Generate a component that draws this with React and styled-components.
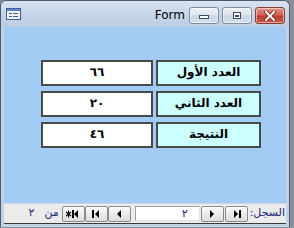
import React from 'react';
import styled, { createGlobalStyle } from 'styled-components';

const GlobalStyle = createGlobalStyle`
  html, body {
    margin: 0;
    padding: 0;
    background: #8a8f96;
    overflow: hidden;
  }
`;

const Window = styled.div`
  width: 288px;
  height: 226px;
  border: 1px solid #4d5b70;
  border-bottom: none;
  border-radius: 6px 6px 0 0;
  background: #c3d3e7;
  display: flex;
  flex-direction: column;
  overflow: hidden;
`;

const TitleBar = styled.div`
  height: 26px;
  flex-shrink: 0;
  display: flex;
  align-items: flex-start;
  padding: 6px 4px 0 5px;
  box-sizing: border-box;
  border-radius: 5px 5px 0 0;
  background: linear-gradient(to bottom, #d9e4f1 0%, #c7d6e9 45%, #bccde3 100%);
`;

const TitleIcon = styled.div`
  margin-top: 1px;
  display: flex;
`;

const TitleText = styled.span`
  flex: 1;
  text-align: right;
  padding-right: 4px;
  font-family: "DejaVu Sans", sans-serif;
  font-size: 12px;
  line-height: 17px;
  color: #000;
`;

const CaptionButtons = styled.div`
  display: flex;
  gap: 3px;
`;

const CaptionButton = styled.div`
  width: 28px;
  height: 15px;
  border: 1px solid ${(p) => (p.close ? '#8a3b30' : '#7f8ea3')};
  border-radius: 3px;
  display: flex;
  align-items: center;
  justify-content: center;
  background: ${(p) => (p.close
    ? 'linear-gradient(to bottom, #e0948a 0%, #d0604f 48%, #bb3d2c 52%, #c85a48 100%)'
    : 'linear-gradient(to bottom, #eef2f7 0%, #dbe3ee 48%, #c9d5e4 52%, #d6e0ec 100%)')};
  box-shadow: inset 0 0 0 1px rgba(255, 255, 255, 0.5);
`;

const Client = styled.div`
  margin: 0 3px;
  display: flex;
  flex-direction: column;
`;

const FormBody = styled.div`
  height: 176px;
  background: #a3ccf5;
  direction: rtl;
  padding: 33px 25px 0 0;
  box-sizing: border-box;
`;

const FieldGrid = styled.div`
  display: grid;
  grid-template-columns: 105px 112px;
  grid-auto-rows: 26px;
  column-gap: 3px;
  row-gap: 5px;
`;

const Cell = styled.div`
  box-sizing: border-box;
  border: 2px solid #4a4a4a;
  background: ${(p) => (p.label ? '#ccffff' : '#ffffff')};
  display: flex;
  align-items: center;
  justify-content: center;
  font-family: "DejaVu Sans", sans-serif;
  font-weight: bold;
  font-size: 12px;
  color: #000;
  padding-bottom: 2px;
`;

const RecordBar = styled.div`
  height: 19px;
  background: #ebebeb;
  border-top: 1px solid #c9d6e4;
  border-bottom: 1px solid #3a3a3a;
  direction: rtl;
  display: flex;
  align-items: center;
  padding-right: 1px;
  font-family: "DejaVu Sans", sans-serif;
  font-size: 11px;
  color: #1a237e;
`;

const BarLabel = styled.span`
  margin-left: 2px;
  padding-bottom: 2px;
`;

const NavButton = styled.div`
  width: 21px;
  height: 14px;
  margin-left: ${(p) => p.gap ?? 1}px;
  border: 1px solid #8c8c8c;
  border-radius: 2px;
  background: linear-gradient(to bottom, #fbfbfb 0%, #ebebeb 50%, #dcdcdc 100%);
  display: flex;
  align-items: center;
  justify-content: center;
`;

const RecordBox = styled.div`
  width: 65px;
  height: 15px;
  margin-left: 4px;
  background: #fff;
  border: 1px solid #a0a0a0;
  border-right-color: #e0e0e0;
  border-bottom-color: #e0e0e0;
  box-sizing: border-box;
  padding-right: 11px;
  line-height: 13px;
`;

const OfText = styled.span`
  margin-right: 3px;
  padding-bottom: 2px;
`;

const CountText = styled.span`
  margin-right: 10px;
  padding-bottom: 2px;
`;

const FormIcon = () => (
  <svg width="15" height="12" viewBox="0 0 15 12">
    <rect x="0.5" y="0.5" width="14" height="11" fill="#f4f7fb" stroke="#3f5f95" />
    <rect x="1" y="1" width="13" height="2" fill="#5b86c6" />
    <rect x="3" y="5" width="3" height="1" fill="#3f5f95" />
    <rect x="7" y="5" width="5" height="1" fill="#3f5f95" />
    <rect x="3" y="8" width="3" height="1" fill="#3f5f95" />
    <rect x="7" y="8" width="5" height="1" fill="#3f5f95" />
  </svg>
);

const MinGlyph = () => (
  <svg width="12" height="8" viewBox="0 0 12 8">
    <rect x="1.5" y="3.5" width="9" height="3" fill="#fff" stroke="#3d4b60" />
  </svg>
);

const MaxGlyph = () => (
  <svg width="12" height="10" viewBox="0 0 12 10">
    <rect x="2.5" y="1.5" width="7" height="6" fill="#fff" stroke="#3d4b60" />
    <rect x="4" y="4" width="4" height="2" fill="#3d4b60" />
  </svg>
);

const CloseGlyph = () => (
  <svg width="14" height="10" viewBox="0 0 14 10">
    <path d="M3 1 L11 9 M11 1 L3 9" stroke="#5a1e16" strokeWidth="3.4" strokeLinecap="square" />
    <path d="M3 1 L11 9 M11 1 L3 9" stroke="#fff" strokeWidth="2" strokeLinecap="square" />
  </svg>
);

// navigation glyphs: dir "r" points right, "l" points left
const NavGlyph = ({ dir, bar, star }) => (
  <svg width="15" height="10" viewBox="0 0 15 10">
    {dir === 'r' && (
      <>
        <path d="M5 1 L9 5 L5 9 Z" fill="#000" />
        {bar && <rect x="10" y="1" width="2" height="8" fill="#000" />}
      </>
    )}
    {dir === 'l' && !star && (
      <>
        <path d={bar ? 'M10 1 L6 5 L10 9 Z' : 'M9 1 L5 5 L9 9 Z'} fill="#000" />
        {bar && <rect x="3" y="1" width="2" height="8" fill="#000" />}
      </>
    )}
    {star && (
      <>
        <path d="M12 1 L8 5 L12 9 Z" fill="#000" />
        <rect x="6" y="1" width="2" height="8" fill="#000" />
        <path d="M2.5 1.5 V8.5 M0 3 L5 7 M5 3 L0 7" stroke="#000" strokeWidth="1.1" />
      </>
    )}
  </svg>
);

const fields = [
  { label: 'العدد الأول', value: '٦٦' },
  { label: 'العدد الثاني', value: '٢٠' },
  { label: 'النتيجة', value: '٤٦' },
];

const App = () => (
  <>
    <GlobalStyle />
    <Window>
      <TitleBar>
        <TitleIcon><FormIcon /></TitleIcon>
        <TitleText>Form</TitleText>
        <CaptionButtons>
          <CaptionButton><MinGlyph /></CaptionButton>
          <CaptionButton><MaxGlyph /></CaptionButton>
          <CaptionButton close><CloseGlyph /></CaptionButton>
        </CaptionButtons>
      </TitleBar>
      <Client>
        <FormBody>
          <FieldGrid>
            {fields.map((f) => (
              <React.Fragment key={f.label}>
                <Cell label>{f.label}</Cell>
                <Cell>{f.value}</Cell>
              </React.Fragment>
            ))}
          </FieldGrid>
        </FormBody>
        <RecordBar>
          <BarLabel>السجل:</BarLabel>
          <NavButton><NavGlyph dir="r" bar /></NavButton>
          <NavButton gap={1}><NavGlyph dir="r" /></NavButton>
          <RecordBox>٢</RecordBox>
          <NavButton gap={0}><NavGlyph dir="l" /></NavButton>
          <NavButton gap={0}><NavGlyph dir="l" bar /></NavButton>
          <NavButton gap={0}><NavGlyph star /></NavButton>
          <OfText>من</OfText>
          <CountText>٢</CountText>
        </RecordBar>
      </Client>
    </Window>
  </>
);

export default App;
